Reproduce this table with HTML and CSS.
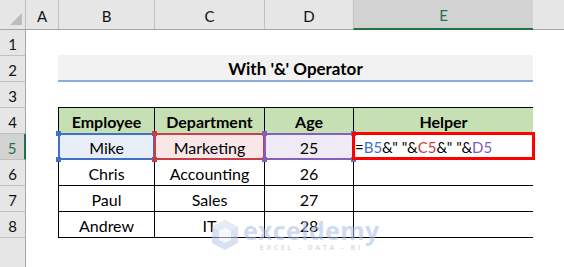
FILE: index.html
```html
<!DOCTYPE html>
<html>
<head>
<meta charset="utf-8">
<link rel="stylesheet" href="styles.css">
</head>
<body>
<div class="sheet">
  <div class="colhead">
    <div class="corner"><span class="tri"></span></div>
    <div class="ch ca">A</div>
    <div class="ch cb">B</div>
    <div class="ch cc">C</div>
    <div class="ch cd">D</div>
    <div class="ch ce active">E</div>
    <div class="ch rest"></div>
  </div>
  <div class="body">
    <div class="rowhead">
      <div class="rh">1</div>
      <div class="rh">2</div>
      <div class="rh">3</div>
      <div class="rh">4</div>
      <div class="rh active">5</div>
      <div class="rh">6</div>
      <div class="rh">7</div>
      <div class="rh">8</div>
      <div class="rh rest"></div>
    </div>
    <div class="canvas">
      <div class="title">With '&amp;' Operator</div>
      <div class="data">
        <div class="cell head">Employee</div>
        <div class="cell head">Department</div>
        <div class="cell head">Age</div>
        <div class="cell head">Helper</div>

        <div class="cell ref refb">Mike<i class="h tl"></i><i class="h tr"></i><i class="h bl"></i><i class="h br"></i></div>
        <div class="cell ref refc">Marketing<i class="h tl"></i><i class="h tr"></i><i class="h bl"></i><i class="h br"></i></div>
        <div class="cell ref refd">25<i class="h tl"></i><i class="h tr"></i><i class="h bl"></i><i class="h br"></i></div>
        <div class="cell formula"><span>=</span><span class="fb">B5</span><span>&amp;" "&amp;</span><span class="fc">C5</span><span>&amp;" "&amp;</span><span class="fd">D5</span></div>

        <div class="cell">Chris</div>
        <div class="cell">Accounting</div>
        <div class="cell">26</div>
        <div class="cell"></div>

        <div class="cell">Paul</div>
        <div class="cell">Sales</div>
        <div class="cell">27</div>
        <div class="cell"></div>

        <div class="cell">Andrew</div>
        <div class="cell">IT</div>
        <div class="cell">28</div>
        <div class="cell"></div>
      </div>
    </div>
  </div>
  <div class="watermark">
    <svg class="wm-logo" width="28" height="32" viewBox="0 0 28 32">
      <path d="M14 1 L27 8 L27 24 L14 31 L1 24 L1 8 Z" fill="#b9c9e6"/>
      <path d="M14 1 L27 8 L14 15 L1 8 Z" fill="#d3def0"/>
      <path d="M8 12 L14 9 L20 12 L20 21 L14 24 L8 21 Z" fill="#ffffff" opacity="0.7"/>
    </svg>
    <div class="wm-text">
      <div class="wm-name">exceldemy</div>
      <div class="wm-sub">EXCEL - DATA - BI</div>
    </div>
  </div>
</div>
</body>
</html>
```
FILE: styles.css
```css
* {
  box-sizing: border-box;
  margin: 0;
  padding: 0;
}

body {
  margin: 0;
  width: 564px;
  height: 267px;
  overflow: hidden;
  background: #ffffff;
  font-family: Lato, "Liberation Sans", sans-serif;
  color: #000;
}

.sheet {
  position: relative;
  width: 564px;
  height: 267px;
  display: flex;
  flex-direction: column;
}

/* column header bar */
.colhead {
  display: flex;
  height: 30px;
  background: #e6e6e6;
  border-bottom: 1px solid #a6a6a6;
  flex: none;
}

.corner {
  width: 26px;
  border-right: 1px solid #c0c0c0;
  display: flex;
  align-items: flex-end;
  justify-content: flex-end;
  padding: 0 3px 4px 0;
}

.tri {
  width: 0;
  height: 0;
  border-left: 12px solid transparent;
  border-bottom: 12px solid #bdbdbd;
}

.ch {
  display: flex;
  align-items: center;
  justify-content: center;
  font-size: 15px;
  color: #111;
  padding-top: 2px;
}

.ca { width: 32px; }
.cb { width: 96px; border-left: 1px solid #c0c0c0; }
.cc { width: 110px; border-left: 1px solid #c0c0c0; }
.cd { width: 89px; border-left: 1px solid #c0c0c0; }
.ce { width: 180px; border-left: 1px solid #c0c0c0; }
.ch.rest { flex: 1; }

.ch.active {
  background: #d2d2d2;
  color: #217346;
  border-bottom: 2px solid #217346;
  margin-bottom: -1px;
}

/* body */
.body {
  flex: 1;
  display: flex;
}

.rowhead {
  width: 26px;
  display: flex;
  flex-direction: column;
  background: #e6e6e6;
  border-right: 1px solid #a6a6a6;
}

.rh {
  height: 26px;
  flex: none;
  display: flex;
  align-items: center;
  justify-content: center;
  font-size: 15px;
  color: #111;
  border-bottom: 1px solid #c0c0c0;
  padding-top: 2px;
}

.rh.active {
  background: #d2d2d2;
  color: #217346;
  border-right: 2px solid #217346;
  margin-right: -1px;
}

.rh.rest {
  flex: 1;
  border-bottom: none;
}

.canvas {
  flex: 1;
  display: grid;
  grid-template-columns: 32px 96px 110px 89px 180px 1fr;
  grid-template-rows: repeat(8, 26px) 1fr;
}

.title {
  grid-column: 2 / 6;
  grid-row: 2;
  margin-top: -1px;
  height: 27px;
  background: #f2f2f2;
  border-bottom: 2px solid #8ea9db;
  display: flex;
  align-items: center;
  justify-content: center;
  font-weight: 700;
  font-size: 17px;
  padding-top: 1px;
}

.data {
  grid-column: 2 / 6;
  grid-row: 4 / 9;
  align-self: start;
  margin-top: -1px;
  background: #000;
  padding: 1px;
  display: grid;
  grid-template-columns: 95px 109px 88px 179px;
  grid-auto-rows: 25px;
  gap: 1px;
  height: 131px;
}

.cell {
  background: #fff;
  display: flex;
  align-items: center;
  justify-content: center;
  font-size: 16px;
  padding-top: 1px;
}

.cell.head {
  background: #c6e0b4;
  font-weight: 700;
}

.ref {
  position: relative;
}

.ref::after {
  content: "";
  position: absolute;
  inset: -1px;
  border: 2px solid;
}

.refb { background: #e7eef9; }
.refb::after { border-color: #3f72c6; }
.refb .h { background: #3f72c6; }

.refc { background: #f9e7e7; }
.refc::after { border-color: #c63f48; }
.refc .h { background: #c63f48; }

.refd { background: #efebf6; }
.refd::after { border-color: #855fbd; }
.refd .h { background: #855fbd; }

.h {
  position: absolute;
  width: 5px;
  height: 5px;
  z-index: 2;
}

.h.tl { left: -3px; top: -3px; }
.h.tr { right: -3px; top: -3px; }
.h.bl { left: -3px; bottom: -3px; }
.h.br { right: -3px; bottom: -3px; }

.formula {
  position: relative;
  justify-content: flex-start;
  padding-left: 1px;
  font-size: 15px;
}

.formula::after {
  content: "";
  position: absolute;
  top: -2px;
  left: -2px;
  right: -2px;
  bottom: -1px;
  border: 3px solid #ff0000;
  z-index: 3;
}

.fb { color: #3a74cc; }
.fc { color: #cc3c3c; }
.fd { color: #7e5dc0; }

/* watermark overlay */
.watermark {
  position: absolute;
  left: 211px;
  top: 218px;
  display: flex;
  align-items: flex-start;
  gap: 4px;
  opacity: 0.55;
  pointer-events: none;
}

.wm-logo {
  margin-top: 1px;
}

.wm-text {
  display: flex;
  flex-direction: column;
  align-items: center;
}

.wm-name {
  font-family: "Open Sans", "Liberation Sans", sans-serif;
  font-weight: 700;
  font-size: 25px;
  line-height: 25px;
  color: #a9bfe6;
  letter-spacing: 0.3px;
}

.wm-sub {
  font-family: "Open Sans", "Liberation Sans", sans-serif;
  font-weight: 700;
  font-size: 7px;
  line-height: 8px;
  letter-spacing: 2.6px;
  color: #c4c4c4;
  margin-top: 1px;
}
```
